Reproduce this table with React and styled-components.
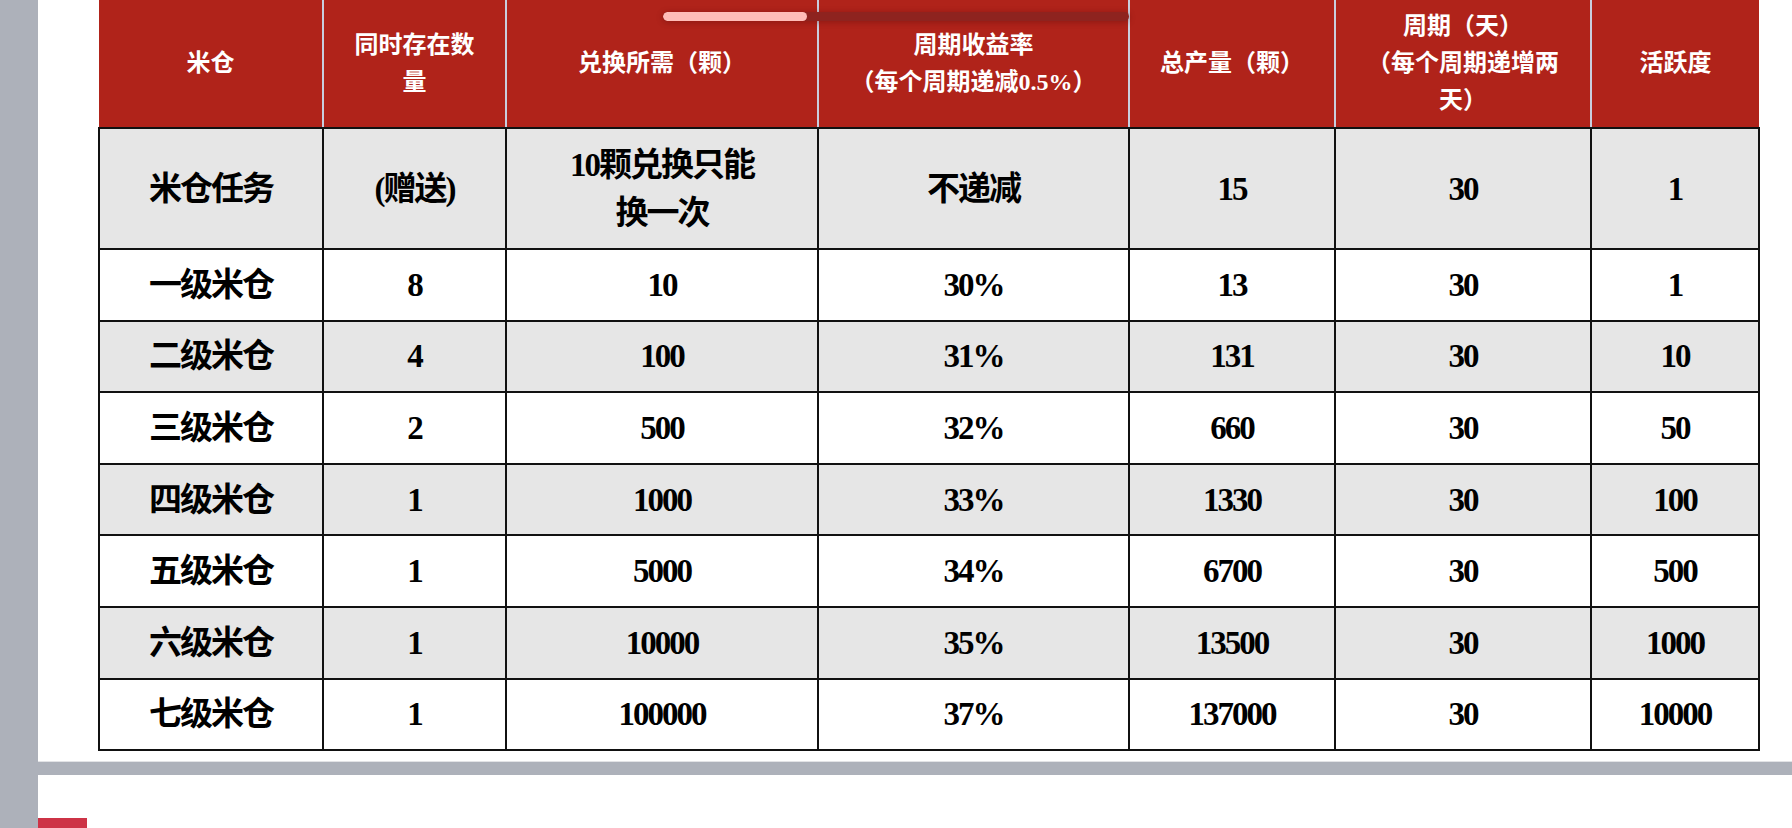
import React from "react";
import styled, { createGlobalStyle } from "styled-components";

const GlobalStyle = createGlobalStyle`
  html, body {
    margin: 0;
    padding: 0;
    background: #adb1ba;
    overflow: hidden;
  }
`;

const headers = [
  ["米仓"],
  ["同时存在数", "量"],
  ["兑换所需（颗）"],
  ["周期收益率", "（每个周期递减0.5%）"],
  ["总产量（颗）"],
  ["周期（天）", "（每个周期递增两", "天）"],
  ["活跃度"],
];

const widths = [224, 183, 312, 311, 206, 256, 168];

const rows = [
  ["米仓任务", "(赠送)", ["10颗兑换只能", "换一次"], "不递减", "15", "30", "1"],
  ["一级米仓", "8", "10", "30%", "13", "30", "1"],
  ["二级米仓", "4", "100", "31%", "131", "30", "10"],
  ["三级米仓", "2", "500", "32%", "660", "30", "50"],
  ["四级米仓", "1", "1000", "33%", "1330", "30", "100"],
  ["五级米仓", "1", "5000", "34%", "6700", "30", "500"],
  ["六级米仓", "1", "10000", "35%", "13500", "30", "1000"],
  ["七级米仓", "1", "100000", "37%", "137000", "30", "10000"],
];

export default function App() {
  return (
    <>
      <GlobalStyle />
      <Page>
        <Gutter />
        <Main>
          <Panel>
            <ScrollThumb>
              <span />
            </ScrollThumb>
            <Table>
              <colgroup>
                {widths.map((w, i) => (
                  <col key={i} style={{ width: w }} />
                ))}
              </colgroup>
              <thead>
                <HeadRow>
                  {headers.map((lines, i) => (
                    <Th key={i}>
                      {lines.map((l, j) => (
                        <div key={j}>{l}</div>
                      ))}
                    </Th>
                  ))}
                </HeadRow>
              </thead>
              <tbody>
                {rows.map((r, i) => (
                  <Row key={i} $first={i === 0} $shaded={i % 2 === 0}>
                    {r.map((c, j) => (
                      <Td key={j}>
                        {Array.isArray(c)
                          ? c.map((l, k) => <Line key={k}>{l}</Line>)
                          : c}
                      </Td>
                    ))}
                  </Row>
                ))}
              </tbody>
            </Table>
          </Panel>
          <Lower>
            <RedTab />
          </Lower>
        </Main>
      </Page>
    </>
  );
}

const Page = styled.div`
  display: flex;
  width: 1792px;
  height: 828px;
  background: #adb1ba;
  overflow: hidden;
`;

const Gutter = styled.div`
  width: 38px;
  flex-shrink: 0;
`;

const Main = styled.div`
  flex: 1;
  display: flex;
  flex-direction: column;
  gap: 13px;
  min-height: 0;
`;

const Panel = styled.div`
  position: relative;
  flex-shrink: 0;
  height: 762px;
  background: #fff;
  padding-left: 60px;
  box-sizing: border-box;
  border-bottom: 1px solid #e2e3e6;
`;

const ScrollThumb = styled.div`
  position: absolute;
  left: 625px;
  top: 12px;
  width: 466px;
  height: 9px;
  border-radius: 5px;
  background: #8e231f;
  box-shadow: 0 1px 6px rgba(90, 10, 10, 0.45);
  overflow: hidden;
  span {
    display: block;
    width: 144px;
    height: 100%;
    border-radius: 5px;
    background: #ffbdb8;
  }
`;

const Table = styled.table`
  border-collapse: collapse;
  table-layout: fixed;
  width: 1660px;
  font-family: "Liberation Serif", "Noto Sans CJK SC", serif;
`;

const HeadRow = styled.tr`
  height: 128px;
  background: #b0231a;
`;

const Th = styled.th`
  padding: 0 6px;
  color: #fff;
  font-size: 24px;
  font-weight: 600;
  line-height: 37px;
  text-align: center;
  vertical-align: middle;
  border-left: 2px solid #c9cede;
  border-bottom: 2px solid #111;
  &:first-child {
    border-left: none;
  }
`;

const Row = styled.tr`
  height: ${(p) => (p.$first ? "121px" : "71.6px")};
  background: ${(p) => (p.$shaded ? "#e6e6e6" : "#fff")};
`;

const Td = styled.td`
  padding: 0 4px;
  border: 2px solid #111;
  color: #000;
  font-size: 33px;
  font-weight: 700;
  letter-spacing: -2px;
  text-align: center;
  vertical-align: middle;
  line-height: 40px;
`;

const Line = styled.div`
  line-height: 48px;
`;

const Lower = styled.div`
  flex: 1;
  min-height: 0;
  background: #fff;
  padding-top: 43px;
`;

const RedTab = styled.div`
  width: 49px;
  height: 20px;
  background: #cd3346;
`;
